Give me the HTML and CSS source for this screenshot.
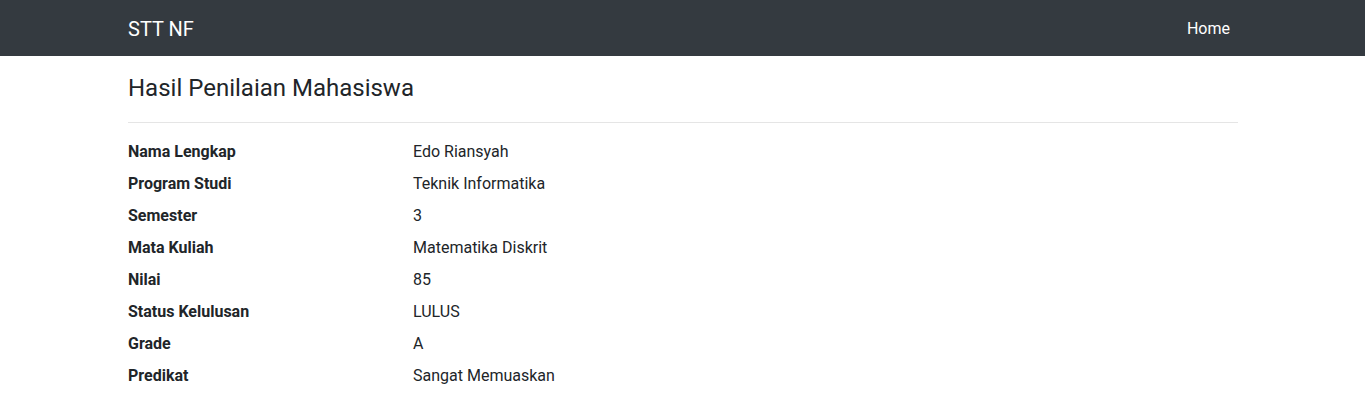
FILE: index.html
```html
<!DOCTYPE html>
<html lang="id">
<head>
<meta charset="utf-8">
<title>Hasil Penilaian Mahasiswa</title>
<link rel="stylesheet" href="styles.css">
</head>
<body>
<nav class="navbar">
  <div class="container nav-inner">
    <a class="brand" href="#">STT NF</a>
    <a class="nav-link" href="#">Home</a>
  </div>
</nav>
<main class="container main">
  <h4 class="title">Hasil Penilaian Mahasiswa</h4>
  <hr class="divider">
  <div class="row"><div class="label">Nama Lengkap</div><div class="value">Edo Riansyah</div></div>
  <div class="row"><div class="label">Program Studi</div><div class="value">Teknik Informatika</div></div>
  <div class="row"><div class="label">Semester</div><div class="value">3</div></div>
  <div class="row"><div class="label">Mata Kuliah</div><div class="value">Matematika Diskrit</div></div>
  <div class="row"><div class="label">Nilai</div><div class="value">85</div></div>
  <div class="row"><div class="label">Status Kelulusan</div><div class="value">LULUS</div></div>
  <div class="row"><div class="label">Grade</div><div class="value">A</div></div>
  <div class="row"><div class="label">Predikat</div><div class="value">Sangat Memuaskan</div></div>
</main>
</body>
</html>
```
FILE: styles.css
```css
* { box-sizing: border-box; }
html, body { margin: 0; }
body {
  font-family: Roboto, "Helvetica Neue", Arial, sans-serif;
  font-size: 16px;
  line-height: 1.5;
  color: #212529;
  background: #fff;
}
.container {
  width: 100%;
  max-width: 1140px;
  padding: 0 14.5px 0 15.5px;
  margin: 0 auto;
}
.navbar {
  background: #343a40;
  padding: 9px 0 7px;
}
.nav-inner {
  display: flex;
  align-items: center;
  justify-content: space-between;
}
.brand {
  color: #fff;
  text-decoration: none;
  font-size: 20px;
  line-height: 30px;
  padding: 5px 0;
}
.nav-link {
  color: #fff;
  text-decoration: none;
  padding: 8px;
}
.main {
  padding-top: 18px;
}
.title {
  margin: 0;
  font-size: 24px;
  font-weight: 400;
  line-height: 1.2;
}
.divider {
  margin: 19px 0 17px;
  border: 0;
  border-top: 1px solid rgba(0,0,0,.1);
  height: 0;
}
.row {
  display: grid;
  grid-template-columns: 285px 1fr;
  margin-bottom: 8px;
}
.label { font-weight: 700; }
```
